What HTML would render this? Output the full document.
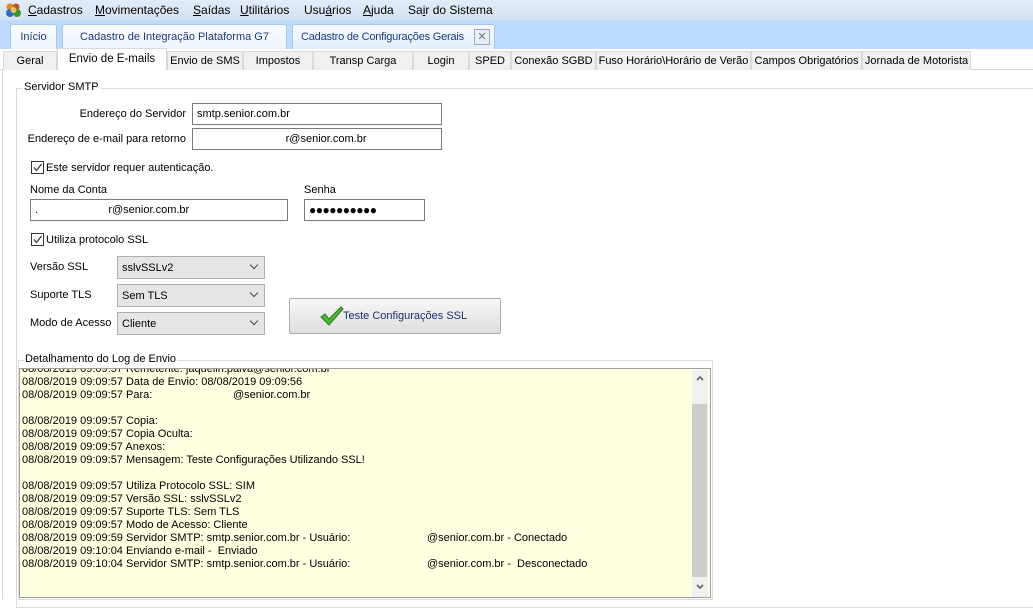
<!DOCTYPE html>
<html><head><meta charset="utf-8"><style>
*{margin:0;padding:0;box-sizing:border-box}
body{width:1033px;height:599px;overflow:hidden;background:#fff;font-family:"Liberation Sans",Arial,sans-serif;font-size:11px;color:#000;position:relative}
.a{position:absolute;white-space:pre}
.menu{position:absolute;left:0;top:0;width:1033px;height:20px;background:linear-gradient(#e3ecf8,#d4e2f4)}
.menu span{position:absolute;top:3px;font-size:12px}
.strip{position:absolute;left:0;top:20px;width:1033px;height:29px;background:#bcdbfd}
.dt{position:absolute;top:24px;height:25px;background:linear-gradient(#fafcff,#eef5fd);border:1px solid #a9c9ec;border-bottom:none;border-radius:3px 3px 0 0;color:#1f3a78;font-size:11px;padding-top:6px;text-align:center;white-space:nowrap}
.tabs{position:absolute;left:0;top:49px;width:1033px;height:21px;background:#fff}
.t{position:absolute;top:51px;height:19px;background:#f0f0f0;border:1px solid #d9d9d9;border-bottom:none;font-size:11px;text-align:center;padding-top:3px;white-space:nowrap}
.inp{position:absolute;height:22px;border:1px solid #7a7a7a;background:#fff;padding:4px 4px;font-size:11px;white-space:pre}
.cb{position:absolute;width:13px;height:13px;border:1px solid #333;background:#fff}
.cmb{position:absolute;left:117px;width:148px;height:23px;border:1px solid #adadad;background:#e5e5e5;padding:5px 4px;font-size:11px}
.cmb:after{content:"";position:absolute;right:7px;top:5px;width:5px;height:5px;border-right:1px solid #444;border-bottom:1px solid #444;transform:rotate(45deg)}
.log div{height:13px;line-height:13px;font-size:11px;white-space:pre;position:relative}
</style></head><body>
<div class="menu">
<svg style="position:absolute;left:5px;top:2px" width="17" height="16"><circle cx="5" cy="5" r="3.5" fill="#e08a20"/><circle cx="11" cy="5" r="3.5" fill="#c0502a"/><circle cx="5" cy="11" r="4" fill="#2a6fc0"/><circle cx="12" cy="11" r="4" fill="#3a9a30"/><circle cx="8.5" cy="8" r="3" fill="#e8c060"/></svg>
<span style="left:28px"><u>C</u>adastros</span>
<span style="left:95px"><u>M</u>ovimentações</span>
<span style="left:193px"><u>S</u>aídas</span>
<span style="left:240px"><u>U</u>tilitários</span>
<span style="left:304px">Usu<u>á</u>rios</span>
<span style="left:363px"><u>A</u>juda</span>
<span style="left:408px">Sa<u>i</u>r do Sistema</span>
</div>
<div class="strip"></div>
<div class="dt" style="left:10px;width:47px">Início</div>
<div class="dt" style="left:62px;width:225px">Cadastro de Integração Plataforma G7</div>
<div class="dt" style="left:292px;width:203px;text-align:left;padding-left:8px;background:linear-gradient(#f6faff,#e4effc);letter-spacing:-0.2px">Cadastro de Configurações Gerais<span style="position:absolute;right:4px;top:4px;width:16px;height:16px;border:1px solid #9ab;background:#e8eef5;color:#777;font-size:11px;line-height:14px;text-align:center;letter-spacing:0">✕</span></div>
<div class="tabs"></div>
<div style="position:absolute;left:0;top:69px;width:1033px;height:1px;background:#d9d9d9"></div>
<div class="t" style="left:3px;width:54px">Geral</div>
<div class="t" style="left:57px;width:110px;top:48px;height:22px;background:#fff;font-size:11.5px;padding-top:4px">Envio de E-mails</div>
<div class="t" style="left:167px;width:76px">Envio de SMS</div>
<div class="t" style="left:243px;width:70px">Impostos</div>
<div class="t" style="left:313px;width:100px">Transp Carga</div>
<div class="t" style="left:413px;width:56px">Login</div>
<div class="t" style="left:469px;width:42px">SPED</div>
<div class="t" style="left:511px;width:85px">Conexão SGBD</div>
<div class="t" style="left:596px;width:155px">Fuso Horário\Horário de Verão</div>
<div class="t" style="left:751px;width:111px">Campos Obrigatórios</div>
<div class="t" style="left:862px;width:109px">Jornada de Motorista</div>

<div style="position:absolute;left:2px;top:70px;width:1px;height:529px;background:#d9d9d9"></div>
<div style="position:absolute;left:16px;top:88px;width:1020px;height:520px;border:1px solid #d9d9d9"></div>
<div class="a" style="left:22px;top:81px;background:#fff;padding:0 2px;font-size:11px">Servidor SMTP</div>

<div class="a" style="left:0;width:186px;text-align:right;top:108px">Endereço do Servidor</div>
<div class="inp" style="left:192px;top:103px;width:250px">smtp.senior.com.br</div>
<div class="a" style="left:0;width:186px;text-align:right;top:133px">Endereço de e-mail para retorno</div>
<div class="inp" style="left:192px;top:128px;width:250px">                             r@senior.com.br</div>

<div class="cb" style="left:31px;top:161px"><svg width="11" height="11" style="position:absolute;left:0;top:0"><path d="M2 5.5 L4.5 8.5 L9.5 2" stroke="#333" fill="none" stroke-width="1.2"/></svg></div>
<div class="a" style="left:46px;top:162px">Este servidor requer autenticação.</div>
<div class="a" style="left:30px;top:184px">Nome da Conta</div>
<div class="a" style="left:304px;top:184px">Senha</div>
<div class="inp" style="left:30px;top:199px;width:258px">.                       r@senior.com.br</div>
<div class="inp" style="left:304px;top:199px;width:121px;font-size:12px;padding-top:3px;letter-spacing:-0.5px">●●●●●●●●●●</div>

<div class="cb" style="left:31px;top:233px"><svg width="11" height="11" style="position:absolute;left:0;top:0"><path d="M2 5.5 L4.5 8.5 L9.5 2" stroke="#333" fill="none" stroke-width="1.2"/></svg></div>
<div class="a" style="left:46px;top:234px">Utiliza protocolo SSL</div>

<div class="a" style="left:30px;top:261px">Versão SSL</div>
<div class="cmb" style="top:256px">sslvSSLv2</div>
<div class="a" style="left:30px;top:289px">Suporte TLS</div>
<div class="cmb" style="top:284px">Sem TLS</div>
<div class="a" style="left:30px;top:317px">Modo de Acesso</div>
<div class="cmb" style="top:312px">Cliente</div>

<div style="position:absolute;left:289px;top:298px;width:212px;height:36px;border:1px solid #acacac;border-radius:2px;background:linear-gradient(#f7f7f7,#dedede)">
<svg style="position:absolute;left:30px;top:7px" width="24" height="20"><path d="M1 11 L5 8 L9 13 L21 1 L23 3 L9 19 Z" fill="#4fb43a" stroke="#2d7d1f" stroke-width="1"/></svg>
<div class="a" style="left:53px;top:11px;color:#1a2f6b;font-size:11px">Teste Configurações SSL</div>
</div>

<div style="position:absolute;left:18px;top:360px;width:695px;height:240px;border:1px solid #dcdcdc"></div>
<div class="a" style="left:24px;top:353px;background:#fff;padding:0 1px;font-size:11px">Detalhamento do Log de Envio</div>
<div style="position:absolute;left:19px;top:368px;width:692px;height:230px;border:1px solid #a0a0a0;background:#ffffe1;overflow:hidden">
<div class="log" style="position:absolute;left:2px;top:-6px">
<div>08/08/2019 09:09:57 Remetente: jaquelin.paiva@senior.com.br</div>
<div>08/08/2019 09:09:57 Data de Envio: 08/08/2019 09:09:56</div>
<div>08/08/2019 09:09:57 Para:<span style="position:absolute;left:211px">@senior.com.br</span></div>
<div> </div>
<div>08/08/2019 09:09:57 Copia:</div>
<div>08/08/2019 09:09:57 Copia Oculta:</div>
<div>08/08/2019 09:09:57 Anexos:</div>
<div>08/08/2019 09:09:57 Mensagem: Teste Configurações Utilizando SSL!</div>
<div> </div>
<div>08/08/2019 09:09:57 Utiliza Protocolo SSL: SIM</div>
<div>08/08/2019 09:09:57 Versão SSL: sslvSSLv2</div>
<div>08/08/2019 09:09:57 Suporte TLS: Sem TLS</div>
<div>08/08/2019 09:09:57 Modo de Acesso: Cliente</div>
<div>08/08/2019 09:09:59 Servidor SMTP: smtp.senior.com.br - Usuário:<span style="position:absolute;left:405px">@senior.com.br - Conectado</span></div>
<div>08/08/2019 09:10:04 Enviando e-mail -  Enviado</div>
<div>08/08/2019 09:10:04 Servidor SMTP: smtp.senior.com.br - Usuário:<span style="position:absolute;left:405px">@senior.com.br -  Desconectado</span></div>
</div>
<div style="position:absolute;left:672px;top:1px;width:16px;height:227px;background:#f0f0f0"></div>
<div style="position:absolute;left:672px;top:35px;width:15px;height:173px;background:#cdcdcd"></div>
<svg style="position:absolute;left:674px;top:5px" width="12" height="10"><path d="M3 6 L6 3 L9 6" stroke="#606060" stroke-width="1.6" fill="none"/></svg>
<svg style="position:absolute;left:674px;top:213px" width="12" height="10"><path d="M3 3 L6 6 L9 3" stroke="#606060" stroke-width="1.6" fill="none"/></svg>
</div>
</body></html>
